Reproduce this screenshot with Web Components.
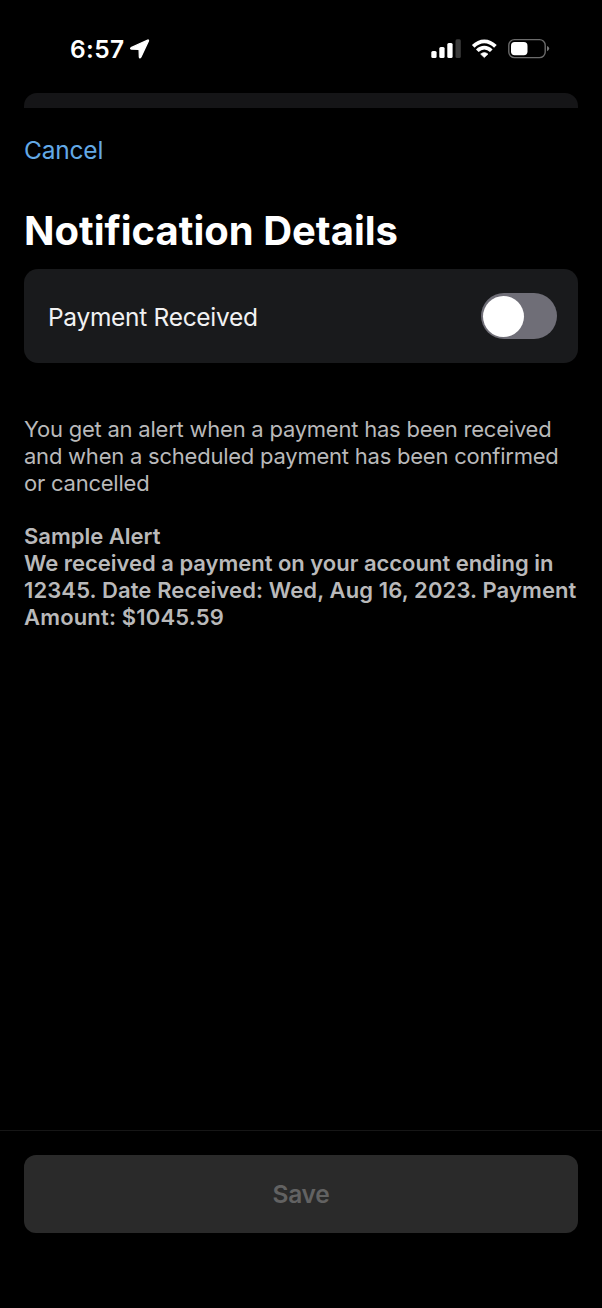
<!DOCTYPE html>
<html lang="en">
<head>
<meta charset="utf-8">
<title>Notification Details</title>
<style>
html,body{margin:0;height:100%;background:#000;overflow:hidden}
body{font-family:Inter,"Liberation Sans",sans-serif;color:#fff}
</style>
</head>
<body>
<notification-screen></notification-screen>
<script>
const define=(name,html)=>customElements.define(name,class extends HTMLElement{
  constructor(){super();this.attachShadow({mode:'open'}).innerHTML=html;}
});

define('status-bar',`<style>
:host{display:flex;height:93px;box-sizing:border-box;padding:33px 52px 0 70px;align-items:flex-start;justify-content:space-between}
.time{display:flex;align-items:center;height:32px;font-size:24.5px;font-weight:570;letter-spacing:.4px;line-height:32px}
svg{display:block}
.time svg{margin-left:4.5px}
</style>
<div class="time"><span>6:57</span><svg width="21" height="22" viewBox="0 0 22 22"><path d="M19.6 1.6 2.2 9.6Q.9 10.6 2.5 11.1L9.8 11.3Q10.6 11.4 10.6 12.2L10.8 19.4Q11.3 21 12.4 19.6L20.4 2.5Q20.7 1.3 19.6 1.6Z" fill="#fff" stroke="#fff" stroke-width="1.3" stroke-linejoin="round"/></svg></div>
<svg width="119" height="32" viewBox="431 33 119 32">
<g fill="#fff"><rect x="431.3" y="51" width="5.3" height="7" rx="1.5"/><rect x="439.3" y="47" width="5.3" height="11" rx="1.5"/><rect x="447.3" y="43" width="5.3" height="15" rx="1.5"/><rect x="455.5" y="39.3" width="5.3" height="18.7" rx="1.5" fill="#3a3a3a"/>
<path d="M484.3 57.6 480.6 54.1Q484.3 51 488 54.1Z" stroke="#fff" stroke-width=".6" stroke-linejoin="round"/></g>
<g fill="none" stroke="#fff" stroke-width="3.7"><path d="M473.2 46.4Q478.2 41.3 484.3 41.3T495.4 46.4"/><path d="M477.3 50.7Q480.4 47.6 484.3 47.6T491.3 50.7"/></g>
<rect x="508.8" y="39.6" width="36.4" height="18" rx="5.7" fill="none" stroke="#6b6b6b" stroke-width="1.4"/><rect x="511" y="42" width="16.5" height="13.3" rx="3.7" fill="#fff"/><path d="M547 45.9Q549.2 46.8 549.2 48.6T547 51.3Z" fill="#777"/>
</svg>`);

define('sheet-edge',`<style>:host{display:block;height:15px;margin:0 24px;background:#151517;border-radius:13px 13px 0 0}</style>`);

define('nav-action',`<style>:host{display:block;margin:26px 24px 0;height:32px;line-height:32px;font-size:24.5px;letter-spacing:-.2px;color:#63a9e6}</style><slot></slot>`);

define('page-title',`<style>:host{display:block;margin:40px 24px 0;height:50px;line-height:50px;font-size:40px;font-weight:700}</style><slot></slot>`);

define('toggle-switch',`<style>:host{display:flex;box-sizing:border-box;width:76.5px;height:46px;border-radius:23px;padding:2.5px;background:#6f6e77;align-items:center}
i{width:41px;height:41px;border-radius:50%;background:#fff}</style><i></i>`);

define('setting-row',`<style>:host{display:flex;box-sizing:border-box;margin:13.4px 24px 0;height:94px;padding:0 21px 0 24px;border-radius:14px;background:#191a1c;align-items:center;justify-content:space-between}
span{font-size:24.5px;letter-spacing:-.3px;color:#f1f1f2;line-height:32px;padding-top:1px}</style><span><slot></slot></span><toggle-switch></toggle-switch>`);

define('text-block',`<style>:host{display:block;margin:52.6px 24px 0;font-size:22px;line-height:27px;letter-spacing:-.23px;color:#b9b9ba;white-space:nowrap}
:host([strong]){margin-top:26px;font-weight:600;letter-spacing:0}</style><slot></slot>`);
define('text-line',`<style>:host{display:block;height:27px}</style><slot></slot>`);

define('save-footer',`<style>:host{display:block;box-sizing:border-box;height:178px;border-top:1.5px solid #161616;padding:24px 24px 0}
button{display:block;width:100%;height:78px;border:0;border-radius:12px;background:#2a2a2a;color:#626262;font:600 24.5px Inter,"Liberation Sans",sans-serif;letter-spacing:-.2px}</style><button disabled><slot></slot></button>`);

define('notification-screen',`<style>:host{display:flex;flex-direction:column;width:602px;height:1308px;background:#000}
save-footer{margin-top:auto}
.intro{letter-spacing:-.02px}.detail{letter-spacing:.12px}.amount{letter-spacing:.17px}</style>
<status-bar></status-bar><sheet-edge></sheet-edge><nav-action>Cancel</nav-action><page-title>Notification Details</page-title>
<setting-row>Payment Received</setting-row>
<text-block><text-line>You get an alert when a payment has been received</text-line><text-line>and when a scheduled payment has been confirmed</text-line><text-line>or cancelled</text-line></text-block>
<text-block strong><text-line>Sample Alert</text-line><text-line class="intro">We received a payment on your account ending in</text-line><text-line class="detail">12345. Date Received: Wed, Aug 16, 2023. Payment</text-line><text-line class="amount">Amount: $1045.59</text-line></text-block>
<save-footer>Save</save-footer>`);
</script>
</body>
</html>
